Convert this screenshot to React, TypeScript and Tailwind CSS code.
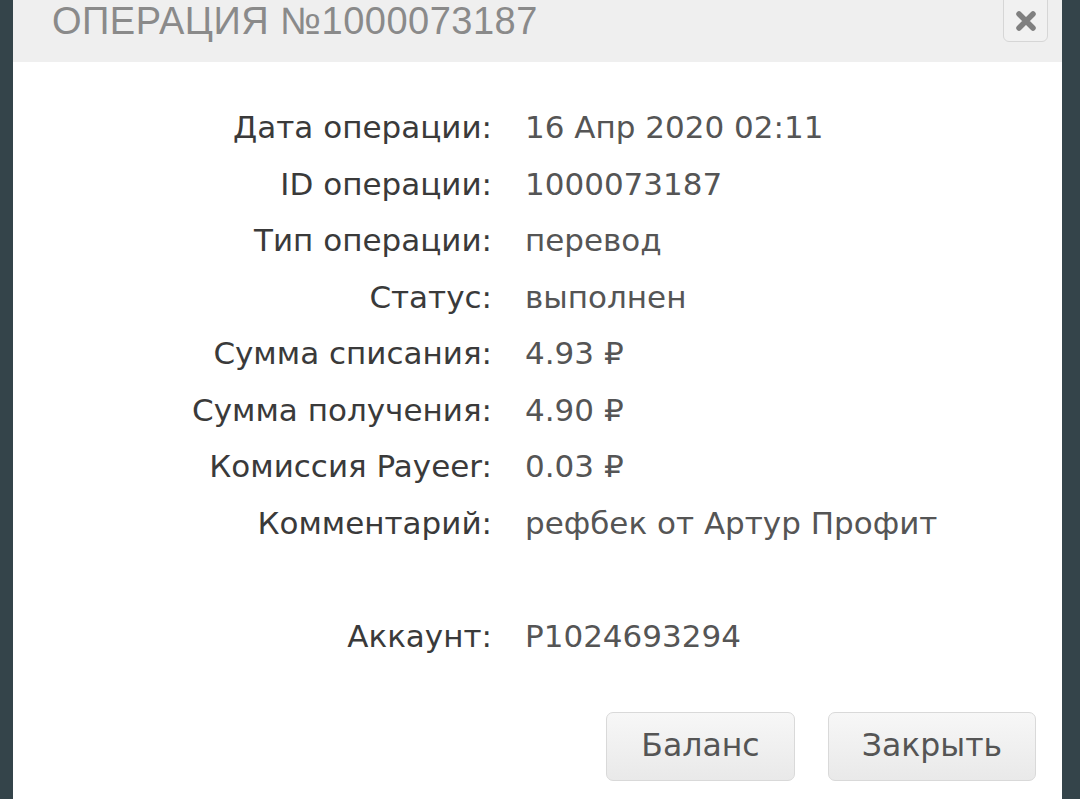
import React from "react";

const rows = [
  { label: "Дата операции:", value: "16 Апр 2020 02:11" },
  { label: "ID операции:", value: "1000073187" },
  { label: "Тип операции:", value: "перевод" },
  { label: "Статус:", value: "выполнен" },
  { label: "Сумма списания:", value: "4.93 ₽" },
  { label: "Сумма получения:", value: "4.90 ₽" },
  { label: "Комиссия Payeer:", value: "0.03 ₽" },
  { label: "Комментарий:", value: "рефбек от Артур Профит" },
];

export default function App() {
  return (
    <div className="h-[799px] w-[1080px] overflow-hidden bg-[#34444a] pl-[13px] pr-[18px]">
      <div className="flex h-full flex-col bg-white">
        {/* Header */}
        <div className="flex h-[62px] items-start justify-between bg-[#efefef] pl-[39px] pr-[14px]">
          <h1
            className="text-[38px] leading-[42px] tracking-[0.5px] text-[#8a8a8a]"
            style={{ fontFamily: '"Liberation Sans", Arial, sans-serif' }}
          >
            ОПЕРАЦИЯ №1000073187
          </h1>
          <button className="mt-[-6px] flex h-[48px] w-[45px] items-center justify-center rounded-[6px] border border-[#d6d6d6] bg-[#f1f1f1] pt-[6px]">
            <svg width="22" height="22" viewBox="0 0 22 22">
              <path d="M4 4 L18 18 M18 4 L4 18" stroke="#808080" strokeWidth="5.5" strokeLinecap="round" />
            </svg>
          </button>
        </div>

        {/* Details */}
        <div
          className="grid grid-cols-[479px_1fr] gap-x-[33px] pt-[37px] text-[31px]"
          style={{ fontFamily: '"DejaVu Sans", sans-serif' }}
        >
          {rows.map((r) => (
            <React.Fragment key={r.label}>
              <div className="flex h-[56.5px] items-center justify-end text-[#3a3a3a]">{r.label}</div>
              <div className="flex h-[56.5px] items-center text-[#555555]">{r.value}</div>
            </React.Fragment>
          ))}
          <div className="h-[57px]" />
          <div className="h-[57px]" />
          <div className="flex h-[56.5px] items-center justify-end text-[#3a3a3a]">Аккаунт:</div>
          <div className="flex h-[56.5px] items-center text-[#555555]">P1024693294</div>
        </div>

        {/* Buttons */}
        <div
          className="mt-[47px] flex justify-end gap-[33px] pr-[26px]"
          style={{ fontFamily: '"DejaVu Sans", sans-serif' }}
        >
          <button className="h-[69px] w-[189px] rounded-[7px] border border-[#d9d9d9] bg-gradient-to-b from-[#f7f7f7] to-[#e9e9e9] text-[31.5px] text-[#555555]">
            Баланс
          </button>
          <button className="h-[69px] w-[208px] rounded-[7px] border border-[#d9d9d9] bg-gradient-to-b from-[#f7f7f7] to-[#e9e9e9] text-[31.5px] text-[#555555]">
            Закрыть
          </button>
        </div>
      </div>
    </div>
  );
}
